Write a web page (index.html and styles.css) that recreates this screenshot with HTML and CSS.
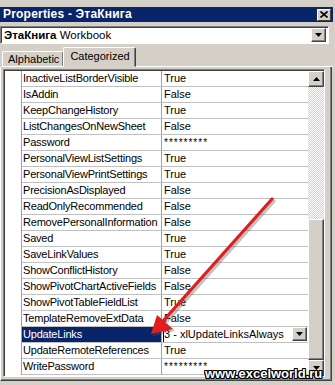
FILE: index.html
```html
<!DOCTYPE html>
<html>
<head>
<meta charset="utf-8">
<link rel="stylesheet" href="styles.css">
</head>
<body>
<div class="win">
  <div class="title">
    <span class="title-text">Properties - ЭтаКнига</span>
    <span class="close"><svg width="8" height="7" viewBox="0 0 8 7"><path d="M0.5 0.5 L7.5 6.5 M7.5 0.5 L0.5 6.5" stroke="#000" stroke-width="1.6"/></svg></span>
  </div>
  <div class="combo">
    <span class="combo-text"><b>ЭтаКнига</b> Workbook</span>
    <span class="btn dd"><svg width="7" height="4" viewBox="0 0 7 4"><path d="M0 0H7L3.5 4Z" fill="#000"/></svg></span>
  </div>
  <div class="tabs">
    <div class="tab">Alphabetic</div>
    <div class="tab active">Categorized</div>
    <div class="tab-fill"></div>
  </div>
  <div class="panel">
    <div class="grid">
      <div class="rows">
        <div class="row"><div class="gut"></div><div class="name">InactiveListBorderVisible</div><div class="val">True</div></div>
        <div class="row"><div class="gut"></div><div class="name">IsAddin</div><div class="val">False</div></div>
        <div class="row"><div class="gut"></div><div class="name">KeepChangeHistory</div><div class="val">True</div></div>
        <div class="row"><div class="gut"></div><div class="name">ListChangesOnNewSheet</div><div class="val">False</div></div>
        <div class="row"><div class="gut"></div><div class="name">Password</div><div class="val pw">*********</div></div>
        <div class="row"><div class="gut"></div><div class="name">PersonalViewListSettings</div><div class="val">True</div></div>
        <div class="row"><div class="gut"></div><div class="name">PersonalViewPrintSettings</div><div class="val">True</div></div>
        <div class="row"><div class="gut"></div><div class="name">PrecisionAsDisplayed</div><div class="val">False</div></div>
        <div class="row"><div class="gut"></div><div class="name">ReadOnlyRecommended</div><div class="val">False</div></div>
        <div class="row"><div class="gut"></div><div class="name">RemovePersonalInformation</div><div class="val">False</div></div>
        <div class="row"><div class="gut"></div><div class="name">Saved</div><div class="val">True</div></div>
        <div class="row"><div class="gut"></div><div class="name">SaveLinkValues</div><div class="val">True</div></div>
        <div class="row"><div class="gut"></div><div class="name">ShowConflictHistory</div><div class="val">False</div></div>
        <div class="row"><div class="gut"></div><div class="name">ShowPivotChartActiveFields</div><div class="val">False</div></div>
        <div class="row"><div class="gut"></div><div class="name">ShowPivotTableFieldList</div><div class="val">True</div></div>
        <div class="row"><div class="gut"></div><div class="name">TemplateRemoveExtData</div><div class="val">False</div></div>
        <div class="row sel"><div class="gut"></div><div class="name">UpdateLinks</div><div class="val edit"><span class="caret">3 - xlUpdateLinksAlways</span><span class="btn vdd"><svg width="7" height="4" viewBox="0 0 7 4"><path d="M0 0H7L3.5 4Z" fill="#000"/></svg></span></div></div>
        <div class="row"><div class="gut"></div><div class="name">UpdateRemoteReferences</div><div class="val">True</div></div>
        <div class="row"><div class="gut"></div><div class="name">WritePassword</div><div class="val pw">*********</div></div>
      </div>
      <div class="sb">
        <div class="btn sbb"><svg width="7" height="4" viewBox="0 0 7 4"><path d="M0 4H7L3.5 0Z" fill="#000"/></svg></div>
        <div class="track"></div>
        <div class="btn thumb"></div>
        <div class="btn sbb"><svg width="7" height="4" viewBox="0 0 7 4"><path d="M0 0H7L3.5 4Z" fill="#000"/></svg></div>
      </div>
    </div>
  </div>
</div>
<svg class="arrow" width="335" height="385" viewBox="0 0 335 385">
  <g transform="translate(2,2)" opacity="0.35">
    <line x1="272" y1="199" x2="163" y2="321" stroke="#555" stroke-width="3.5" stroke-linecap="round"/>
    <path d="M151 334 L157 315 L173 329 Z" fill="#555"/>
  </g>
  <line x1="272" y1="199" x2="163" y2="321" stroke="#e01e1e" stroke-width="3.2" stroke-linecap="round"/>
  <path d="M151 334 L157 315 L173 329 Z" fill="#e01e1e"/>
</svg>
<div class="wm">www.excelworld.ru</div>
</body>
</html>
```

FILE: styles.css
```css
* { box-sizing: border-box; }
html, body { margin: 0; padding: 0; }
body {
  width: 335px;
  height: 385px;
  overflow: hidden;
  position: relative;
  background: #d4d0c8;
  font: 11px "Liberation Sans", Arial, sans-serif;
  color: #000;
}
.win { padding-top: 7px; width: 333px; }

.title {
  height: 15px;
  background: #0a246a;
  color: #fff;
  font-weight: bold;
  font-size: 12px;
  display: flex;
  align-items: center;
  justify-content: space-between;
  padding: 0 2px 0 3px;
}
.title-text { line-height: 15px; letter-spacing: 0.2px; }
.close {
  width: 14px;
  height: 12px;
  background: #d4d0c8;
  border-top: 1px solid #fff;
  border-left: 1px solid #fff;
  border-right: 1px solid #404040;
  border-bottom: 1px solid #404040;
  display: flex;
  align-items: center;
  justify-content: center;
}

.btn {
  background: #d4d0c8;
  border-top: 1px solid #fff;
  border-left: 1px solid #fff;
  border-right: 1px solid #404040;
  border-bottom: 1px solid #404040;
  box-shadow: inset -1px -1px 0 #808080;
  display: flex;
  align-items: center;
  justify-content: center;
}

.combo {
  margin-top: 4px;
  width: 329px;
  height: 18px;
  background: #fff;
  border-top: 1px solid #808080;
  border-left: 1px solid #808080;
  border-right: 1px solid #fff;
  border-bottom: 1px solid #fff;
  box-shadow: inset 1px 1px 0 #404040;
  display: flex;
  align-items: center;
  justify-content: space-between;
  padding: 0 2px 0 3px;
  font-size: 11.5px;
}
.combo-text { line-height: 14px; }
.dd { width: 15px; height: 14px; }

.tabs {
  margin-top: 3px;
  height: 20px;
  display: flex;
  align-items: flex-end;
  padding-left: 2px;
}
.tab {
  height: 16px;
  padding: 0 4px 0 5px;
  border-top: 1px solid #fff;
  border-left: 1px solid #fff;
  border-right: 1px solid #404040;
  border-radius: 2px 2px 0 0;
  border-bottom: 1px solid #fff;
  line-height: 15px;
  box-shadow: inset -1px 0 0 #808080;
}
.tab.active {
  height: 20px;
  padding: 0 5px 0 6px;
  margin-left: -1px;
  border-bottom: 1px solid #d4d0c8;
  line-height: 17px;
}
.tab-fill { flex: 1; border-bottom: 1px solid #fff; height: 1px; }

.panel {
  width: 332px;
  height: 314px;
  padding: 2px 5px 3px 2px;
  border-left: 1px solid #fff;
  border-right: 1px solid #404040;
  border-bottom: 1px solid #404040;
  box-shadow: inset -1px -1px 0 #808080;
}

.grid {
  display: flex;
  width: 322px;
  height: 308px;
  border-top: 1px solid #808080;
  border-left: 1px solid #808080;
  border-right: 1px solid #fff;
  border-bottom: 1px solid #fff;
  box-shadow: inset 1px 1px 0 #404040;
  padding: 1px 0 0 1px;
  background: #fff;
}
.rows { width: 303px; }
.row {
  display: flex;
  height: 16px;
}
.gut { width: 17px; border-right: 1px solid #a0a0a0; }
.name {
  width: 140px;
  padding-left: 1px;
  border-right: 1px solid #a0a0a0;
  border-bottom: 1px solid #c0c0c0;
  line-height: 15px;
  white-space: nowrap;
  overflow: hidden;
  letter-spacing: -0.2px;
}
.val {
  flex: 1;
  padding-left: 2px;
  border-bottom: 1px solid #c0c0c0;
  line-height: 15px;
  white-space: nowrap;
}
.pw { letter-spacing: 1px; font-size: 10px; }
.sel .name { background: #0a246a; color: #fff; }
.edit { display: flex; justify-content: space-between; padding-right: 1px; padding-left: 1px; }
.caret { border-left: 1px solid #000; padding-left: 0; line-height: 14px; height: 15px; }
.vdd { width: 15px; height: 14px; }

.sb {
  width: 16px;
  display: flex;
  flex-direction: column;
}
.sbb { height: 16px; flex: none; }
.track {
  height: 132px;
  background: repeating-conic-gradient(#ffffff 0 25%, #d4d0c8 0 50%) 0 0 / 2px 2px;
}
.thumb { flex: 1; }

.arrow { position: absolute; left: 0; top: 0; pointer-events: none; }
.wm {
  position: absolute;
  left: 205px;
  top: 366px;
  font: bold 13px "Liberation Sans", Arial, sans-serif;
  color: #fff;
  text-shadow: 1px 0 0 #000, -1px 0 0 #000, 0 1px 0 #000, 0 -1px 0 #000, 1px 1px 0 #000, -1px -1px 0 #000, 1px -1px 0 #000, -1px 1px 0 #000;
}
```
